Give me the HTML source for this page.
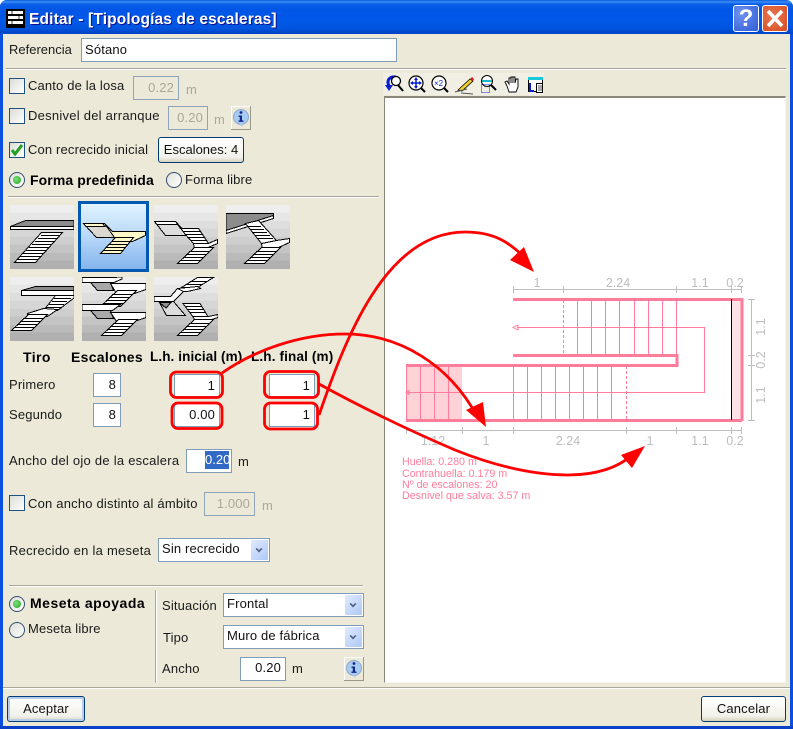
<!DOCTYPE html>
<html><head><meta charset="utf-8"><style>
html,body{margin:0;padding:0;background:#fff}
#w{position:relative;width:793px;height:729px;overflow:hidden;font:13px "Liberation Sans",sans-serif;letter-spacing:.15px;color:#1a1a1a}
.a{position:absolute}
.t{position:absolute;white-space:nowrap;line-height:14px;height:14px}
.b{font-weight:bold;color:#000}
.i{position:absolute;box-sizing:border-box;background:#fff;border:1px solid #7F9DB9;text-align:right;padding-right:4px;line-height:21px;color:#111}
.d{background:#ECE9D8;color:#ACA899;border-color:#8FA5B8}
.c{position:absolute;box-sizing:border-box;width:16px;height:16px;left:9px;border:1px solid #1C5180;background:linear-gradient(135deg,#DCDCD7,#fff)}
.r{position:absolute;box-sizing:border-box;width:16px;height:16px;border:1px solid #2F4F6F;border-radius:50%;background:linear-gradient(135deg,#DCDCD7,#fff)}
.g::after{content:"";position:absolute;left:3px;top:3px;width:8px;height:8px;border-radius:50%;background:radial-gradient(circle at 40% 40%,#7CE07C,#21A121)}
.s{position:absolute;box-sizing:border-box;background:#fff;border:1px solid #7F9DB9;line-height:20px;padding-left:3px;color:#111}
.s i{position:absolute;right:1px;top:1px;bottom:1px;width:17px;background:linear-gradient(135deg,#E1EAFE,#AEC8F7);border-radius:1px}
.s i::after{content:"";position:absolute;left:5px;top:6px;width:4px;height:4px;border-right:2px solid #4D6185;border-bottom:2px solid #4D6185;transform:rotate(45deg) scale(.8)}
.h{position:absolute;height:1px;background:#ACA899;box-shadow:0 1px 0 #fff}
.btn{position:absolute;box-sizing:border-box;border:1px solid #003C74;border-radius:3px;background:linear-gradient(#fff,#F2F1EA 80%,#D8D2BD);text-align:center;color:#111}
.ib{position:absolute;width:20px;height:24px;background:#ECE9D8;border-right:1px solid #9a9888;border-bottom:1px solid #9a9888;box-sizing:border-box;box-shadow:inset 1px 1px 0 #fff}
.stair{position:absolute;width:64px;height:64px;background:linear-gradient(#EEE 0,#EEE 12%,#E6E6E6 12%,#E6E6E6 25%,#DEDEDE 25%,#DEDEDE 37%,#D6D6D6 37%,#D6D6D6 50%,#CECECE 50%,#CECECE 62%,#C4C4C4 62%,#C4C4C4 75%,#BABABA 75%,#BABABA 87%,#B0B0B0 87%)}
.stair svg{position:absolute;left:0;top:0;overflow:hidden}
.stair svg path,.stair svg use{stroke-linejoin:miter}
</style></head><body><div id="w">

<!-- window -->
<div class="a" style="left:0;top:0;width:793px;height:729px;background:#0831D9;border-radius:7px 7px 0 0"></div>
<div class="a" style="left:0;top:0;width:793px;height:35px;border-radius:7px 7px 0 0;background:linear-gradient(#0A5FE0 0,#3C8CF4 2px,#0A5FE8 4px,#0055E5 10px,#0058E8 20px,#0056E0 28px,#0044C8 33px,#0046C8 35px)"></div>
<div class="a" style="left:3px;top:34px;width:787px;height:692px;background:#ECE9D8"></div>
<div class="a" style="left:0;top:34px;width:3px;height:695px;background:#0A4FE0"></div>
<div class="a" style="left:790px;top:34px;width:3px;height:695px;background:#0A4FE0"></div>
<div class="a" style="left:0;top:726px;width:793px;height:3px;background:#0A3FC8"></div>

<!-- title icon -->
<svg class="a" style="left:6px;top:9px" width="20" height="20" shape-rendering="crispEdges"><rect width="19" height="19" x="0" y="0" fill="#000"/><g fill="#fff"><rect x="2" y="2" width="15" height="3"/><rect x="2" y="7" width="15" height="3"/><rect x="2" y="12" width="15" height="3"/></g><g fill="#999"><rect x="5" y="2" width="2" height="3"/><rect x="12" y="7" width="2" height="3"/><rect x="5" y="12" width="2" height="3"/></g></svg>
<div class="t" style="left:29px;top:12px;font:bold 15.5px/16px 'Liberation Sans',sans-serif;color:#fff;text-shadow:1px 1px 0 #0F1089;height:16px;letter-spacing:.15px">Editar - [Tipologías de escaleras]</div>

<!-- ? X -->
<div class="a" style="left:733px;top:5px;width:26px;height:27px;box-sizing:border-box;border:1px solid #fff;border-radius:3px;background:radial-gradient(circle at 30% 30%,#6F93EE,#2F5BD8)"></div>
<div class="t" style="left:733px;top:8px;width:26px;text-align:center;font:bold 24px/22px 'Liberation Sans',sans-serif;color:#fff;height:22px">?</div>
<div class="a" style="left:762px;top:5px;width:26px;height:27px;box-sizing:border-box;border:1px solid #fff;border-radius:3px;background:radial-gradient(circle at 40% 40%,#E87850,#D84A20)"></div>
<svg class="a" style="left:762px;top:5px" width="26" height="27"><path d="M6 6L20 21M20 6L6 21" stroke="#fff" stroke-width="3.6" fill="none"/></svg>

<!-- referencia -->
<div class="t" style="left:9px;top:43px;letter-spacing:0">Referencia</div>
<div class="i" style="left:81px;top:38px;width:316px;height:24px;text-align:left;padding-left:3px;line-height:21px">Sótano</div>
<div class="h" style="left:6px;top:68px;width:780px"></div>

<!-- options -->
<div class="c" style="top:78px"></div><div class="t" style="left:28px;top:79px">Canto de la losa</div>
<div class="i d" style="left:133px;top:76px;width:46px;height:24px">0.22</div><div class="t" style="left:186px;top:83px;color:#ACA899">m</div>
<div class="c" style="top:108px"></div><div class="t" style="left:28px;top:109px;letter-spacing:.25px">Desnivel del arranque</div>
<div class="i d" style="left:168px;top:106px;width:40px;height:24px">0.20</div><div class="t" style="left:214px;top:113px;color:#ACA899">m</div>
<div class="ib" style="left:231px;top:106px"></div>
<svg class="a" style="left:231px;top:106px" width="20" height="24"><circle cx="10" cy="11" r="7.5" fill="#A8CBF0" stroke="#8FA8D0"/><path d="M8 17l3 4 1-4z" fill="#A8CBF0"/><circle cx="10" cy="6.5" r="1.4" fill="#12268C"/><path d="M7.5 9.5h3.5v5h1.5v1.4h-5v-1.4h1.3v-3.6H7.5z" fill="#12268C"/></svg>

<div class="c" style="top:142px"></div>
<svg class="a" style="left:9px;top:142px" width="16" height="16"><path d="M3 8l3 4 7-9" stroke="#22A022" stroke-width="3" fill="none"/></svg>
<div class="t" style="left:28px;top:143px">Con recrecido inicial</div>
<div class="btn" style="left:158px;top:137px;width:86px;height:26px;line-height:23px;letter-spacing:0">Escalones: 4</div>

<div class="r g" style="left:9px;top:172px"></div><div class="t b" style="left:30px;top:173px;font-size:14px;letter-spacing:.1px">Forma predefinida</div>
<div class="r" style="left:166px;top:172px;background:linear-gradient(135deg,#E0E0DA,#fff)"></div><div class="t" style="left:185px;top:173px">Forma libre</div>
<div class="h" style="left:8px;top:196px;width:371px"></div>

<!-- stair symbols -->
<svg width="0" height="0" style="position:absolute"><defs>
<g id="f" shape-rendering="crispEdges"><path d="M.5 30.500H21.500L48.500 .5H27.500Z" fill="#fff" stroke="#000"/><path d="M3 27.500H24M6 24.500H27M9 21.500H30M12 18.500H33M15 15.500H35M18 12.500H38M21 9.500H41M24 6.500H44M27 3.500H46" stroke="#000" fill="none"/></g>
<g id="s" shape-rendering="crispEdges"><path d="M.5 16.500H20.500L36.500 .5H17.500Z" fill="#fff" stroke="#000"/><path d="M3 13.500H23M6 10.500H26M9 7.500H29M12 4.500H32" stroke="#000" fill="none"/></g>
</defs></svg>

<!-- icons -->
<div class="stair" style="left:10px;top:205px"><svg width="64" height="64" shape-rendering="crispEdges"><path d="M.5 21.500L15.500 15.500H64V21.500Z" fill="#8C8C8C" stroke="#000"/><path d="M.5 21.500H64V24.500H.5Z" fill="#fff" stroke="#000"/><use href="#f" x="4" y="27"/></svg></div>

<div class="a" style="left:78px;top:201px;width:71px;height:71px;box-sizing:border-box;border:3px solid #0058B0;background:linear-gradient(#DFF3FD,#B8D8F8 50%,#84B4EE)"></div>
<svg class="a" style="left:81px;top:204px" width="65" height="65" shape-rendering="crispEdges"><path d="M2.500 19.500H23.500L33.500 33.500H15.500Z" fill="#DAD8D0" stroke="#000"/><path d="M2.500 19.500H21.500L24 22.500H5Z" fill="#FFFAC8" stroke="#000"/><path d="M23.500 19.500L31.500 27.500H64.500V31.500L51.500 37.500H32.500L33.500 33.500Z" fill="#FFFAC8" stroke="#000"/><path d="M19.500 49.500H39.500L52.500 33.500H34.500Z" fill="#FFFAC8" stroke="#000"/><path d="M22 46.500H42M25 43.500H45M28 40.500H47M31 37.500H49" stroke="#000" fill="none"/></svg>

<div class="stair" style="left:154px;top:205px"><svg width="64" height="64" shape-rendering="crispEdges"><path d="M.5 16.500H21.500L34.500 30.500H11.500Z" fill="#DCDCDC" stroke="#000"/><path d="M.5 16.500H21.500L24 19.500H3Z" fill="#fff" stroke="#000"/><path d="M21.500 16.500L26.500 23.500H44.500L54.500 38.500H39.500L31 29Z" fill="#fff" stroke="#000"/><path d="M29 26.500H46M32 29.500H48M34 32.500H50M37 35.500H52" stroke="#000" fill="none"/><path d="M39.500 38.500H54.500L63.500 34.500V38.500L51.500 43.500H40.500Z" fill="#fff" stroke="#000"/><use href="#s" x="23" y="42"/></svg></div>

<div class="stair" style="left:226px;top:205px"><svg width="64" height="64" shape-rendering="crispEdges"><path d="M0 8.500H47.500V12.500L0 25.500Z" fill="#8C8C8C" stroke="#000"/><path d="M0 25.500L47.500 10.500V13.500L0 28.500Z" fill="#fff" stroke="#000"/><path d="M19.500 18.500L32.500 15.500L50.500 35.500L35.500 38.500Z" fill="#fff" stroke="#000"/><path d="M22 21.500H35M24 24.500H38M26 27.500H41M29 30.500H44M32 33.500H47" stroke="#000" fill="none"/><path d="M35.500 38.500L50.500 35.500L63.500 33.500V37.500L50.500 43.500H36.500Z" fill="#fff" stroke="#000"/><use href="#s" x="18" y="42"/></svg></div>

<div class="stair" style="left:10px;top:277px"><svg width="64" height="64" shape-rendering="crispEdges"><path d="M11.500 13.500L25.500 9.500H64V13.500Z" fill="#8C8C8C" stroke="#000"/><path d="M11.500 13.500H64V18.500H11.500Z" fill="#fff" stroke="#000"/><path d="M45.500 18.500H64V21L47.500 33.500H33.500Z" fill="#fff" stroke="#000"/><path d="M36 30.500H51M39 27.500H54M42 24.500H57M44 21.500H61" stroke="#000" fill="none"/><path d="M17.500 36.500L33.500 31.500L47.500 32.500L37.500 39.500H17.500Z" fill="#fff" stroke="#000"/><use href="#s" x="1" y="37"/></svg></div>

<div class="stair" style="left:82px;top:277px"><svg width="64" height="64" shape-rendering="crispEdges"><path d="M8.500 5.500H28.500L31.500 13.500H15.500Z" fill="#A8A8A8" stroke="#000"/><path d="M0 .5H30L40 0V2L32 5.500H0Z" fill="#fff" stroke="#000"/><path d="M28.500 6.500H64V12.500L52.500 16.500H34.500Z" fill="#fff" stroke="#000"/><use href="#s" x="18" y="13"/><path d="M8.500 33.500H28.500L31.500 41.500H15.500Z" fill="#A8A8A8" stroke="#000"/><path d="M0 27.500H38.500L30.500 33.500H0Z" fill="#fff" stroke="#000"/><path d="M28.500 35.500H64V40.500L52.500 44.500H34.500Z" fill="#fff" stroke="#000"/><use href="#s" x="19" y="42"/></svg></div>

<div class="stair" style="left:154px;top:277px"><svg width="64" height="64" shape-rendering="crispEdges"><path d="M27.500 10.500L43.500 .5H59.500L43.500 10.500Z" fill="#fff" stroke="#000"/><path d="M32 7.500H48M36 4.500H53" stroke="#000" fill="none"/><path d="M23.500 11.500L43.500 9.500L46.500 11.500L33.500 14.500H22.500Z" fill="#fff" stroke="#000"/><path d="M5.500 25.500L19.500 24.500L31.500 38.500H12.500Z" fill="#DCDCDC" stroke="#000"/><path d="M5.500 25.500H17L12 31Z" fill="#909090" stroke="#000"/><path d="M0 19.500H16.500L23.500 11.500L29.500 14.500L19.500 24.500H0Z" fill="#fff" stroke="#000"/><path d="M29 26.500H46L54.500 40.500H39.500Z" fill="#fff" stroke="#000"/><path d="M32 29.500H48M34 32.500H50M36 35.500H52" stroke="#000" fill="none"/><path d="M39.500 39.500H54.500L64 37.500V40.500L51.500 44.500H40.500Z" fill="#fff" stroke="#000"/><use href="#s" x="23" y="42"/></svg></div>

<!-- table -->
<div class="t b" style="left:23px;top:350px;font-size:14px;letter-spacing:.4px">Tiro</div>
<div class="t b" style="left:71px;top:350px;font-size:14px;letter-spacing:.3px">Escalones</div>
<div class="t b" style="left:150px;top:350px;font-size:13.5px;letter-spacing:.1px">L.h. inicial (m)</div>
<div class="t b" style="left:251px;top:350px;font-size:13.5px;letter-spacing:.15px">L.h. final (m)</div>
<div class="t" style="left:9px;top:378px">Primero</div><div class="t" style="left:9px;top:408px">Segundo</div>
<div class="i" style="left:93px;top:373px;width:28px;height:24px">8</div>
<div class="i" style="left:93px;top:403px;width:28px;height:24px">8</div>
<div class="i" style="left:174px;top:374px;width:46px;height:23px">1</div>
<div class="i" style="left:174px;top:403px;width:46px;height:24px">0.00</div>
<div class="i" style="left:269px;top:374px;width:46px;height:23px">1</div>
<div class="i" style="left:269px;top:403px;width:46px;height:24px">1</div>

<div class="t" style="left:9px;top:454px;letter-spacing:.25px">Ancho del ojo de la escalera</div>
<div class="i" style="left:186px;top:449px;width:46px;height:24px;padding-right:2px;line-height:20px;letter-spacing:0"><span style="background:#316AC5;color:#fff;display:inline-block;line-height:18px;width:24px;text-align:right">0.20</span></div>
<div class="t" style="left:238px;top:455px">m</div>

<div class="c" style="top:495px"></div><div class="t" style="left:28px;top:497px;letter-spacing:.2px">Con ancho distinto al ámbito</div>
<div class="i d" style="left:204px;top:492px;width:51px;height:24px">1.000</div><div class="t" style="left:262px;top:499px;color:#ACA899">m</div>

<div class="t" style="left:9px;top:544px;letter-spacing:.25px">Recrecido en la meseta</div>
<div class="s" style="left:158px;top:538px;width:112px;height:24px">Sin recrecido<i></i></div>

<div class="h" style="left:9px;top:585px;width:354px"></div>
<div class="a" style="left:155px;top:590px;width:1px;height:93px;background:#ACA899;box-shadow:1px 0 0 #fff"></div>
<div class="r g" style="left:9px;top:596px"></div><div class="t b" style="left:30px;top:596px;font-size:14px;letter-spacing:.5px">Meseta apoyada</div>
<div class="r" style="left:9px;top:622px"></div><div class="t" style="left:28px;top:622px">Meseta libre</div>
<div class="t" style="left:162px;top:599px">Situación</div>
<div class="s" style="left:223px;top:593px;width:141px;height:24px">Frontal<i></i></div>
<div class="t" style="left:163px;top:631px">Tipo</div>
<div class="s" style="left:223px;top:625px;width:141px;height:24px">Muro de fábrica<i></i></div>
<div class="t" style="left:162px;top:662px">Ancho</div>
<div class="i" style="left:240px;top:657px;width:46px;height:24px;line-height:20px">0.20</div>
<div class="t" style="left:292px;top:662px">m</div>
<div class="ib" style="left:344px;top:657px"></div>
<svg class="a" style="left:344px;top:657px" width="20" height="24"><circle cx="10" cy="11" r="7.5" fill="#A8CBF0" stroke="#8FA8D0"/><path d="M8 17l3 4 1-4z" fill="#A8CBF0"/><circle cx="10" cy="6.5" r="1.4" fill="#12268C"/><path d="M7.5 9.5h3.5v5h1.5v1.4h-5v-1.4h1.3v-3.6H7.5z" fill="#12268C"/></svg>

<!-- bottom -->
<div class="h" style="left:3px;top:687px;width:787px"></div>
<div class="btn" style="left:7px;top:696px;width:78px;height:26px;line-height:24px;box-shadow:inset 0 0 0 2px #B8CDEC">Aceptar</div>
<div class="btn" style="left:701px;top:696px;width:85px;height:26px;line-height:24px">Cancelar</div>

<!-- toolbar -->
<div class="a" style="left:383px;top:73px;width:161px;height:22px;background:#F1EFE4"></div>
<svg class="a" style="left:383px;top:73px" width="161" height="22">
<path d="M6 13C3 7 7 3 13 4" stroke="#0A1ED0" stroke-width="3" fill="none"/><path d="M2 12h8l-4 6z" fill="#0A1ED0"/><circle cx="13" cy="8" r="4.500" fill="#fff" stroke="#000" stroke-width="1.300"/><path d="M15 12l5 6" stroke="#000" stroke-width="2"/>
<circle cx="33" cy="10" r="7" fill="#fff" stroke="#000" stroke-width="1.200"/><path d="M33 5v10M28 10h10" stroke="#0A1ED0" stroke-width="1.500"/><path d="M33 4l-2 3h4zM33 16l-2-3h4zM27 10l3-2v4zM39 10l-3-2v4z" fill="#0A1ED0"/><path d="M38 15l4 4" stroke="#000" stroke-width="2"/>
<circle cx="56" cy="10" r="7" fill="#fff" stroke="#000" stroke-width="1.200"/><text x="51" y="13" font-family="Liberation Sans" font-size="8" fill="#0A1ED0" letter-spacing="0">×2</text><path d="M61 15l4 4" stroke="#000" stroke-width="2"/>
<path d="M75 17L87 6l3 2-11 10z" fill="#F2D330" stroke="#000" stroke-width=".8"/><path d="M87 6l2-2 2 2-1 2z" fill="#D02020"/><path d="M72 19l12-3M78 20l12 1" stroke="#555" fill="none"/>
<circle cx="104" cy="8" r="5.500" fill="#fff" stroke="#000"/><path d="M99 8h10" stroke="#19B8C8" stroke-width="2"/><path d="M108 12l5 5" stroke="#000" stroke-width="2"/><rect x="98.500" y="11.500" width="8" height="8" fill="none" stroke="#0A1ED0" stroke-dasharray="1 1"/>
<path d="M124 13l-2-4 2-1 2 3V5h2v5V4h2v6V4h2v6l1-4h2v8l-2 5h-7z" fill="#fff" stroke="#000" stroke-width=".9"/>
<rect x="145.500" y="4.500" width="14" height="14" fill="#fff" stroke="#000"/><rect x="145" y="4" width="15" height="3" fill="#19C8D8"/><path d="M147 10v8h4" stroke="#0A1ED0" stroke-width="2" fill="none"/><rect x="153.500" y="10.500" width="6" height="9" fill="#fff" stroke="#000"/><path d="M155 13h4M155 15h4M155 17h4" stroke="#555"/>
</svg>

<!-- panel -->
<div class="a" style="left:384px;top:96px;width:402px;height:587px;box-sizing:border-box;background:#fff;border-top:2px solid #8a8878;border-left:1px solid #8a8878;border-right:1px solid #F5F4EC;border-bottom:1px solid #F5F4EC"></div>

<svg class="a" style="left:0;top:0;pointer-events:none;letter-spacing:0" width="793" height="729">
<!-- drawing -->
<rect x="406" y="366" width="56" height="54" fill="#FFD2D7"/>
<rect x="732" y="300" width="9" height="120" fill="#FFE2E5"/>
<g stroke="#FF7D9B" stroke-width="1" fill="none" shape-rendering="crispEdges">
<path d="M577.500 300V354M591.500 300V354M605.500 300V354M619.500 300V354M634.500 300V354M648.500 300V354M662.500 300V354M676.500 300V354"/>
<path d="M513.500 366V420M527.500 366V420M541.500 366V420M555.500 366V420M569.500 366V420M583.500 366V420M597.500 366V420M611.500 366V420"/>
<path d="M406.500 366V420M420.500 366V420M434.500 366V420M448.500 366V420"/>
<path d="M563.500 300V354M626.500 366V420" stroke-dasharray="3 2"/>
<path d="M517 327.500H704.500V392.500H408"/>
<path d="M513 327.500l5-2.500v5zM406 392.500l3-2v4z"/>
</g>
<g stroke="#FF7D9B" stroke-width="3" fill="none" shape-rendering="crispEdges">
<path d="M513 299.500H742V421M513 355.500H677V365.500H406M406 420.500H742"/>
</g>
<rect x="731" y="299" width="1" height="121" fill="#000"/>
<!-- dims -->
<g stroke="#BDBDBD" stroke-width="1" fill="none" shape-rendering="crispEdges">
<path d="M513 289.500H742M406 430.500H742M751.500 299V421"/>
<path d="M513.500 286V293M563.500 286V293M676.500 286V293M731.500 286V293M741.500 286V293M406.500 427V434M462.500 427V434M513.500 427V434M626.500 427V434M676.500 427V434M731.500 427V434M741.500 427V434M748 299.500H755M748 355.500H755M748 365.500H755M748 420.500H755"/>
</g>
<g fill="#BDBDBD" font-family="Liberation Sans" font-size="12.500">
<text x="537" y="287" text-anchor="middle">1</text><text x="618" y="287" text-anchor="middle">2.24</text><text x="700" y="287" text-anchor="middle">1.1</text><text x="735" y="287" text-anchor="middle">0.2</text>
<text x="433" y="445" text-anchor="middle">1.12</text><text x="486" y="445" text-anchor="middle">1</text><text x="568" y="445" text-anchor="middle">2.24</text><text x="650" y="445" text-anchor="middle">1</text><text x="700" y="445" text-anchor="middle">1.1</text><text x="735" y="445" text-anchor="middle">0.2</text>
<text transform="translate(765 327) rotate(-90)" text-anchor="middle">1.1</text><text transform="translate(765 360) rotate(-90)" text-anchor="middle">0.2</text><text transform="translate(765 395) rotate(-90)" text-anchor="middle">1.1</text>
</g>
<g fill="#FF7D9B" font-family="Liberation Sans" font-size="10.700">
<text x="402" y="465">Huella: 0.280 m</text><text x="402" y="477">Contrahuella: 0.179 m</text><text x="402" y="488">Nº de escalones: 20</text><text x="402" y="499">Desnivel que salva: 3.57 m</text>
</g>
<!-- red -->
<g fill="none" stroke="#F00" stroke-width="2.800">
<rect x="170.500" y="372" width="52" height="25.500" rx="6"/>
<rect x="172" y="403" width="50" height="25.500" rx="6"/>
<rect x="264.500" y="371.500" width="54" height="26" rx="6"/>
<rect x="264.500" y="403" width="53" height="26" rx="6"/>
<path d="M319 415C345 340 385 232 465 232C495 232 510 243 525 258"/>
<path d="M222 373C255 350 300 334 345 334C400 334 450 365 478 418"/>
<path d="M319 384C370 412 420 435 455 450C490 464 530 475 568 475C595 475 620 468 635 452"/>
</g>
<g fill="#F00">
<path d="M534 272L510 260L524 247Z"/>
<path d="M486 427L466 410L483 402Z"/>
<path d="M645 446L621 455L632 468Z"/>
</g>
</svg>
</div></body></html>
